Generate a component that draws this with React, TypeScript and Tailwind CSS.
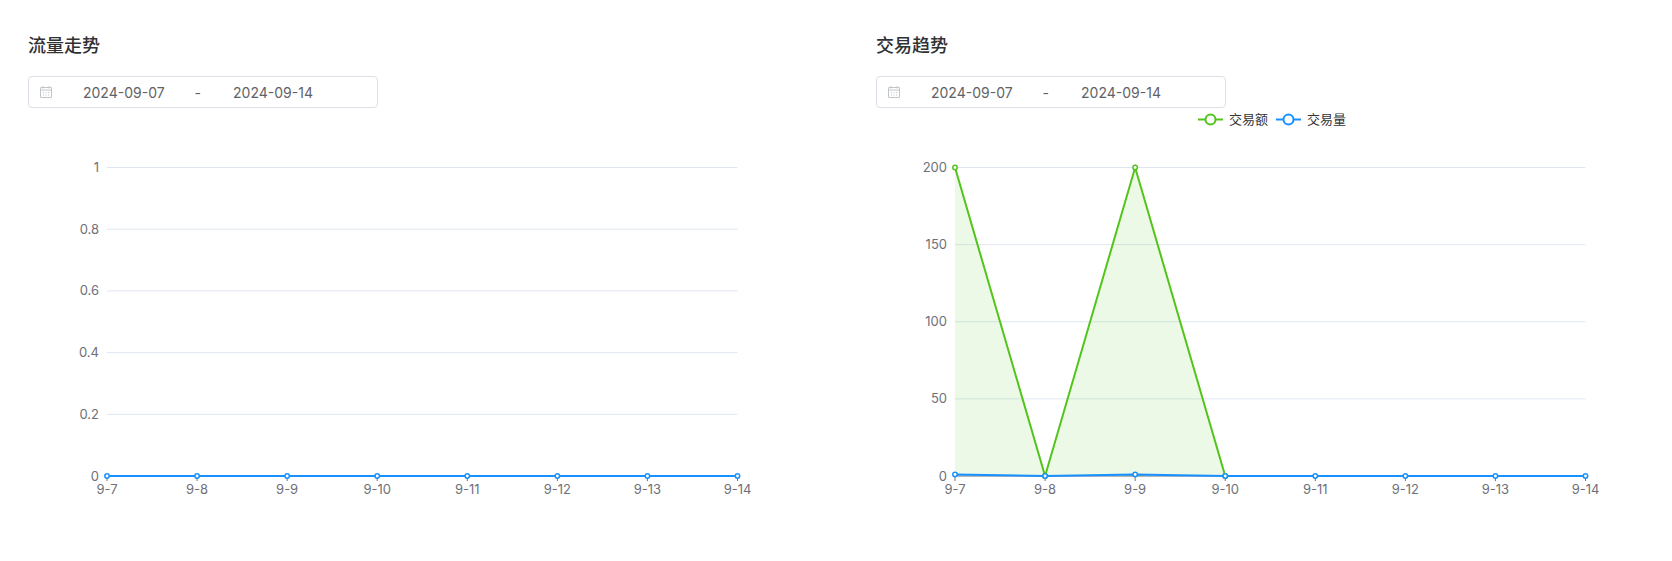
import React from "react";

const xs = ["9-7","9-8","9-9","9-10","9-11","9-12","9-13","9-14"];

function Picker() {
  return (
    <div className="mt-[18px] w-[350px] h-[32px] border border-[#dcdfe6] rounded-[4px] flex items-center text-[14px] text-[#606266]">
      <svg width="14" height="14" viewBox="0 0 14 14" className="ml-[10px]" fill="none" stroke="#c0c4cc" strokeWidth="1">
        <rect x="1.5" y="2.5" width="11" height="10" rx="0.5" />
        <line x1="1.5" y1="5" x2="12.5" y2="5" />
        <line x1="4" y1="1" x2="4" y2="3.5" /><line x1="10" y1="1" x2="10" y2="3.5" />
        <g><line x1="4" y1="7.5" x2="5" y2="7.5"/><line x1="6.5" y1="7.5" x2="7.5" y2="7.5"/><line x1="9" y1="7.5" x2="10" y2="7.5"/><line x1="4" y1="10" x2="5" y2="10"/><line x1="6.5" y1="10" x2="7.5" y2="10"/><line x1="9" y1="10" x2="10" y2="10"/></g>
      </svg>
      <span className="ml-[30px]">2024-09-07</span>
      <span className="ml-[30px]">-</span>
      <span className="ml-[32px]">2024-09-14</span>
    </div>
  );
}

function Chart({ labels, green, blue, max, legend }: { labels: string[]; green?: number[]; blue: number[]; max: number; legend?: boolean }) {
  const x0 = 79, x1 = 709.5, y0 = 59.5, y1 = 368;
  const step = (x1 - x0) / 7;
  const X = (i: number) => x0 + i * step;
  const Y = (v: number) => y1 - (v / max) * (y1 - y0);
  const n = labels.length - 1;
  const pts = (d: number[]) => d.map((v, i) => `${X(i)},${Y(v)}`).join(" ");
  return (
    <svg width="760" height="400" className="block" style={{ fontFamily: "Inter, 'Noto Sans CJK SC', sans-serif" }}>
      {legend && (
        <g fontSize="13" fill="#333">
          <line x1="322" y1="11.5" x2="347" y2="11.5" stroke="#52c41a" strokeWidth="2" />
          <circle cx="334.5" cy="11.5" r="5" fill="#fff" stroke="#52c41a" strokeWidth="2" />
          <text x="353" y="16">交易额</text>
          <line x1="400" y1="11.5" x2="425" y2="11.5" stroke="#1890ff" strokeWidth="2" />
          <circle cx="412.5" cy="11.5" r="5" fill="#fff" stroke="#1890ff" strokeWidth="2" />
          <text x="431" y="16">交易量</text>
        </g>
      )}
      {labels.map((l, i) => {
        const y = y1 - (i / n) * (y1 - y0);
        return (
          <g key={l}>
            {i > 0 && <line x1={x0} x2={x1} y1={y} y2={y} stroke="#e0e6f1" />}
            <text x={x0 - 8} y={y + 4.5} textAnchor="end" fontSize="13" fill="#6e7079">{l}</text>
          </g>
        );
      })}
      <line x1={x0} x2={x1} y1={y1} y2={y1} stroke="#6e7079" />
      {xs.map((l, i) => (
        <g key={l}>
          <line x1={X(i)} x2={X(i)} y1={y1} y2={y1 + 5} stroke="#6e7079" />
          <text x={X(i)} y={y1 + 18} textAnchor="middle" fontSize="13" fill="#6e7079">{l}</text>
        </g>
      ))}
      {green && (
        <>
          <polygon points={`${X(0)},${y1} ${pts(green)}`} fill="#52c41a" fillOpacity="0.11" />
          <polyline points={pts(green)} fill="none" stroke="#52c41a" strokeWidth="2" />
          {green.map((v, i) => <circle key={i} cx={X(i)} cy={Y(v)} r="2.2" fill="#fff" stroke="#52c41a" strokeWidth="1.5" />)}
        </>
      )}
      <polyline points={pts(blue)} fill="none" stroke="#1890ff" strokeWidth="2" />
      {blue.map((v, i) => <circle key={i} cx={X(i)} cy={Y(v)} r="2.2" fill="#fff" stroke="#1890ff" strokeWidth="1.5" />)}
    </svg>
  );
}

export default function App() {
  return (
    <div className="w-[1672px] h-[561px] bg-white flex pt-[34px]" style={{ fontFamily: "Inter, 'Noto Sans CJK SC', sans-serif" }}>
      <div className="w-[876px] pl-[28px]">
        <h2 className="text-[18px] font-medium text-[#303133] leading-[24px]">流量走势</h2>
        <Picker />
        <Chart labels={["0","0.2","0.4","0.6","0.8","1"]} blue={[0,0,0,0,0,0,0,0]} max={1} />
      </div>
      <div className="w-[796px]">
        <h2 className="text-[18px] font-medium text-[#303133] leading-[24px]">交易趋势</h2>
        <Picker />
        <Chart labels={["0","50","100","150","200"]} green={[200,0,200,0]} blue={[1,0,1,0,0,0,0,0]} max={200} legend />
      </div>
    </div>
  );
}
